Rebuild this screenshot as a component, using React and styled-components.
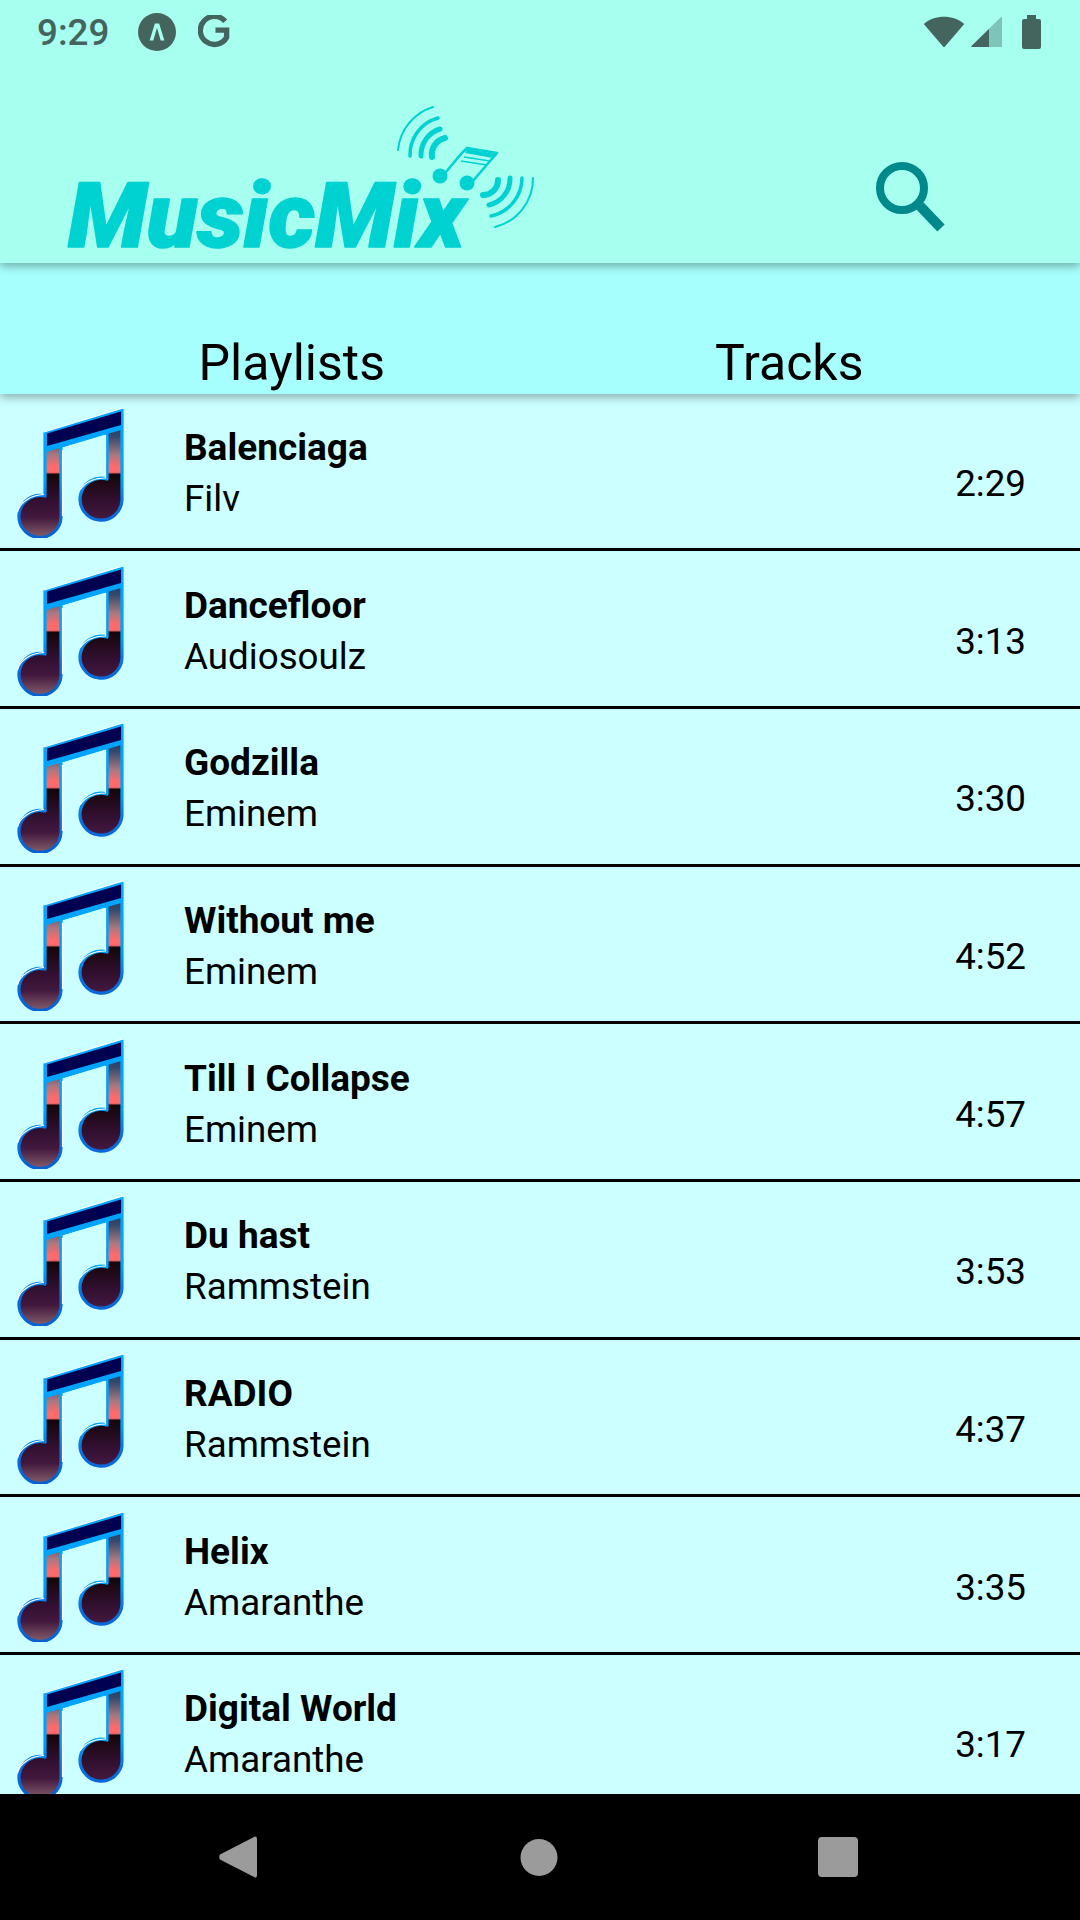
import React from "react"
import styled, {createGlobalStyle} from "styled-components"

const tracks = [
  {title: "Balenciaga", artist: "Filv", time: "2:29"},
  {title: "Dancefloor", artist: "Audiosoulz", time: "3:13"},
  {title: "Godzilla", artist: "Eminem", time: "3:30"},
  {title: "Without me", artist: "Eminem", time: "4:52"},
  {title: "Till I Collapse", artist: "Eminem", time: "4:57"},
  {title: "Du hast", artist: "Rammstein", time: "3:53"},
  {title: "RADIO", artist: "Rammstein", time: "4:37"},
  {title: "Helix", artist: "Amaranthe", time: "3:35"},
  {title: "Digital World", artist: "Amaranthe", time: "3:17"},
]

const GlobalStyle = createGlobalStyle`
  html, body { margin: 0; padding: 0; background: #000; }
  body { font-family: Roboto, "Liberation Sans", sans-serif; }
`

const Page = styled.div`
  width: 1080px;
  height: 1920px;
  display: flex;
  flex-direction: column;
  overflow: hidden;
`
const Header = styled.header`
  height: 263px;
  flex: none;
  background: #a7fff0;
  position: relative;
  z-index: 3;
  box-shadow: 0 3px 9px rgba(0, 0, 0, .34);
`
const StatusBar = styled.div`
  height: 63px;
  display: flex;
  align-items: center;
  padding: 0 39px 0 37px;
  color: #43655e;
`
const Clock = styled.span`
  font-size: 36.75px;
  font-weight: 500;
  line-height: 1;
  padding-top: 3px;
  margin-right: 29px;
`
const Spacer = styled.span`
  display: block;
  flex: ${props => props.width ? "none" : 1};
  width: ${props => props.width || 0}px;
`
const Toolbar = styled.div`
  display: flex;
  justify-content: space-between;
  align-items: flex-start;
  padding: 37px 130px 0 60px;
`
const LogoSvg = styled.svg`
  display: block;
`
const SearchSvg = styled.svg`
  display: block;
  margin-top: 48px;
`
const Tabs = styled.nav`
  height: 130.5px;
  flex: none;
  background: #a6fffc;
  display: flex;
  align-items: flex-end;
  gap: 330px;
  padding-left: 198.5px;
  position: relative;
  z-index: 2;
  box-shadow: 0 3px 9px rgba(0, 0, 0, .34);
`
const Tab = styled.div`
  font-size: 50px;
  line-height: 64px;
  margin-bottom: -1px;
  color: #000;
`
const List = styled.div`
  flex: 1;
  min-height: 0;
  overflow: hidden;
  background: #ccffff;
`
const Row = styled.div`
  box-sizing: border-box;
  height: 157.7px;
  display: flex;
  align-items: center;
  padding: 0 54px 0 15px;
  border-bottom: 3px solid #000;
  color: #000;
`
const NoteSvg = styled.svg`
  flex: none;
  margin-top: 4px;
`
const Info = styled.div`
  flex: 1;
  margin-left: 60px;
  padding-top: 4px;
  font-size: 36.75px;
  line-height: 51px;
`
const Title = styled.div`
  font-weight: 700;
  font-size: 37px;
`
const Artist = styled.div`
  font-weight: 400;
`
const Duration = styled.div`
  font-size: 36.75px;
  line-height: 52px;
  padding-top: 26px;
`
const NavBar = styled.div`
  height: 126px;
  flex: none;
  background: #000;
  display: flex;
  align-items: center;
  gap: 259.5px;
  padding-left: 219px;
`

const NoteIcon = ({id}) => <NoteSvg width="109" height="130" viewBox="0 0 109 130">
  <defs>
    <linearGradient id={`fill-${id}`} x1="0" y1="0" x2="0" y2="130" gradientUnits="userSpaceOnUse">
      <stop offset="0" stopColor="#102a58" />
      <stop offset=".22" stopColor="#34486a" />
      <stop offset=".36" stopColor="#a87880" />
      <stop offset=".45" stopColor="#ff6a6a" />
      <stop offset=".495" stopColor="#ff6a6a" />
      <stop offset=".51" stopColor="#160509" />
      <stop offset=".72" stopColor="#321032" />
      <stop offset=".84" stopColor="#42183e" />
      <stop offset="1" stopColor="#86606c" />
    </linearGradient>
    <linearGradient id={`edge-${id}`} x1="0" y1="0" x2="0" y2="130" gradientUnits="userSpaceOnUse">
      <stop offset="0" stopColor="#00a8ff" />
      <stop offset=".55" stopColor="#00a0f8" />
      <stop offset=".75" stopColor="#0a6fe0" />
      <stop offset="1" stopColor="#0660d0" />
    </linearGradient>
  </defs>
  <path
    d="M30 25 L107 2 L107 92 A21 21 0 1 1 92 71 L92 24 L46 38 L46 109 A21 21 0 1 1 30 88 Z"
    fill={`url(#fill-${id})`}
    stroke={`url(#edge-${id})`}
    strokeWidth="3.2"
    strokeLinejoin="round"
  />
  <path d="M31 25 L106 3 L106 22 L31 44 Z" fill="#00a4ff" />
  <path d="M32 25.500 L106 3.500 L106 17 L32 38 Z" fill="#000050" />
  <path d="M29 24 L108 0" stroke="#fff" strokeWidth="1.2" fill="none" />
  <path d="M47.500 42 L47.500 108 M90.500 27 L90.500 70 C81 70 71 73 65 82" stroke="#fff" strokeWidth="1.2" fill="none" />
  <path d="M2.500 104 C5 94 16 87 29 86.500" stroke="#fff" strokeWidth="1.2" fill="none" />
</NoteSvg>

const Logo = () => <LogoSvg width="480" height="172" viewBox="60 100 480 172">
  <text
    x="68" y="247"
    fontFamily="Roboto, sans-serif" fontSize="90" fontWeight="900" fontStyle="italic"
    textLength="397" lengthAdjust="spacingAndGlyphs"
    fill="#00d2d2" stroke="#00d2d2" strokeWidth="1.5" strokeLinejoin="round"
  >MusicMix</text>
  <g fill="none" stroke="#00d2d2" strokeLinecap="round">
    <path d="M445 138 A17 17 0 0 0 432 157" strokeWidth="6" />
    <path d="M440 129 A27 27 0 0 0 421 156" strokeWidth="5" />
    <path d="M438 118 A38 38 0 0 0 410 156" strokeWidth="3.5" />
    <path d="M433 107 A50 50 0 0 0 398 150" strokeWidth="2" />
    <path d="M498 180 A15 15 0 0 1 483 195" strokeWidth="6" />
    <path d="M510 178 A27 27 0 0 1 489 205" strokeWidth="5" />
    <path d="M522 178 A39 39 0 0 1 491 216" strokeWidth="3.5" />
    <path d="M533 178 A50 50 0 0 1 495 227" strokeWidth="2" />
  </g>
  <circle cx="440" cy="176" r="7.500" fill="#00d2d2" />
  <circle cx="467" cy="183" r="7.500" fill="#00d2d2" />
  <path d="M445 173 C453 164 460 154 467 148 L497 153 L472 182" fill="none" stroke="#00d2d2" strokeWidth="2.5" strokeLinejoin="round" />
  <path d="M467 149 L496 154 L493 158 L465 153 Z" fill="#00d2d2" />
  <path d="M464 157 L490 161 M461 161 L487 165" stroke="#00d2d2" strokeWidth="1.5" />
</LogoSvg>

const SearchIcon = () => <SearchSvg width="90" height="90" viewBox="860 148 90 90">
  <circle cx="902" cy="188" r="22" fill="none" stroke="#00898b" strokeWidth="8" />
  <path d="M920 206 L941 228" stroke="#00898b" strokeWidth="10" fill="none" />
</SearchSvg>

const App = () => <Page>
  <GlobalStyle />
  <Header>
    <StatusBar>
      <Clock>9:29</Clock>
      <svg width="38" height="38" viewBox="0 0 36 36">
        <circle cx="18" cy="18" r="18" fill="#43655e" />
        <path d="M11 26 L16 10 L20 10 L25 26 L21.500 26 L18 14 L14.500 26 Z" fill="#a7fff0" />
      </svg>
      <Spacer width={22} />
      <svg width="33" height="33" viewBox="0 0 32 34">
        <path d="M27 6.500 A14.500 14.500 0 1 0 28.500 23 L28.500 15.500 L17 15.500" fill="none" stroke="#43655e" strokeWidth="5.5" />
      </svg>
      <Spacer />
      <svg width="42" height="32" viewBox="0 0 42 32">
        <path d="M0.800 8 C12 -1.600 30 -1.600 41.200 8 L22 30.500 Q21 31.500 20 30.500 Z" fill="#43655e" />
      </svg>
      <Spacer width={6} />
      <svg width="31" height="32" viewBox="0 0 31 32">
        <path d="M0 30.500 L30 1 L31 1 L31 31 L1 31 Z" fill="#7fc4b8" />
        <path d="M0 30.500 L18 13 L18 31 L1 31 Z" fill="#43655e" />
      </svg>
      <Spacer width={20} />
      <svg width="19" height="34" viewBox="0 0 19 34">
        <path d="M5 0 H14 V4 H17 Q19 4 19 6 V32 Q19 34 17 34 H2 Q0 34 0 32 V6 Q0 4 2 4 H5 Z" fill="#43655e" />
      </svg>
    </StatusBar>
    <Toolbar>
      <Logo />
      <SearchIcon />
    </Toolbar>
  </Header>
  <Tabs>
    <Tab>Playlists</Tab>
    <Tab>Tracks</Tab>
  </Tabs>
  <List>
    {tracks.map((track, i) => <Row key={i}>
      <NoteIcon id={i} />
      <Info>
        <Title>{track.title}</Title>
        <Artist>{track.artist}</Artist>
      </Info>
      <Duration>{track.time}</Duration>
    </Row>)}
  </List>
  <NavBar>
    <svg width="40" height="42" viewBox="0 0 40 42">
      <path d="M36 0.500 Q38 0 38 3 V39 Q38 42 36 41.500 L1 23.500 Q-0.500 21 1 18.500 Z" fill="#9b9b9b" />
    </svg>
    <svg width="40" height="37" viewBox="0 0 40 37"><circle cx="20" cy="18.500" r="18.500" fill="#9b9b9b" /></svg>
    <svg width="40" height="40" viewBox="0 0 40 40"><rect width="40" height="40" rx="4" fill="#9b9b9b" /></svg>
  </NavBar>
</Page>

export default App
